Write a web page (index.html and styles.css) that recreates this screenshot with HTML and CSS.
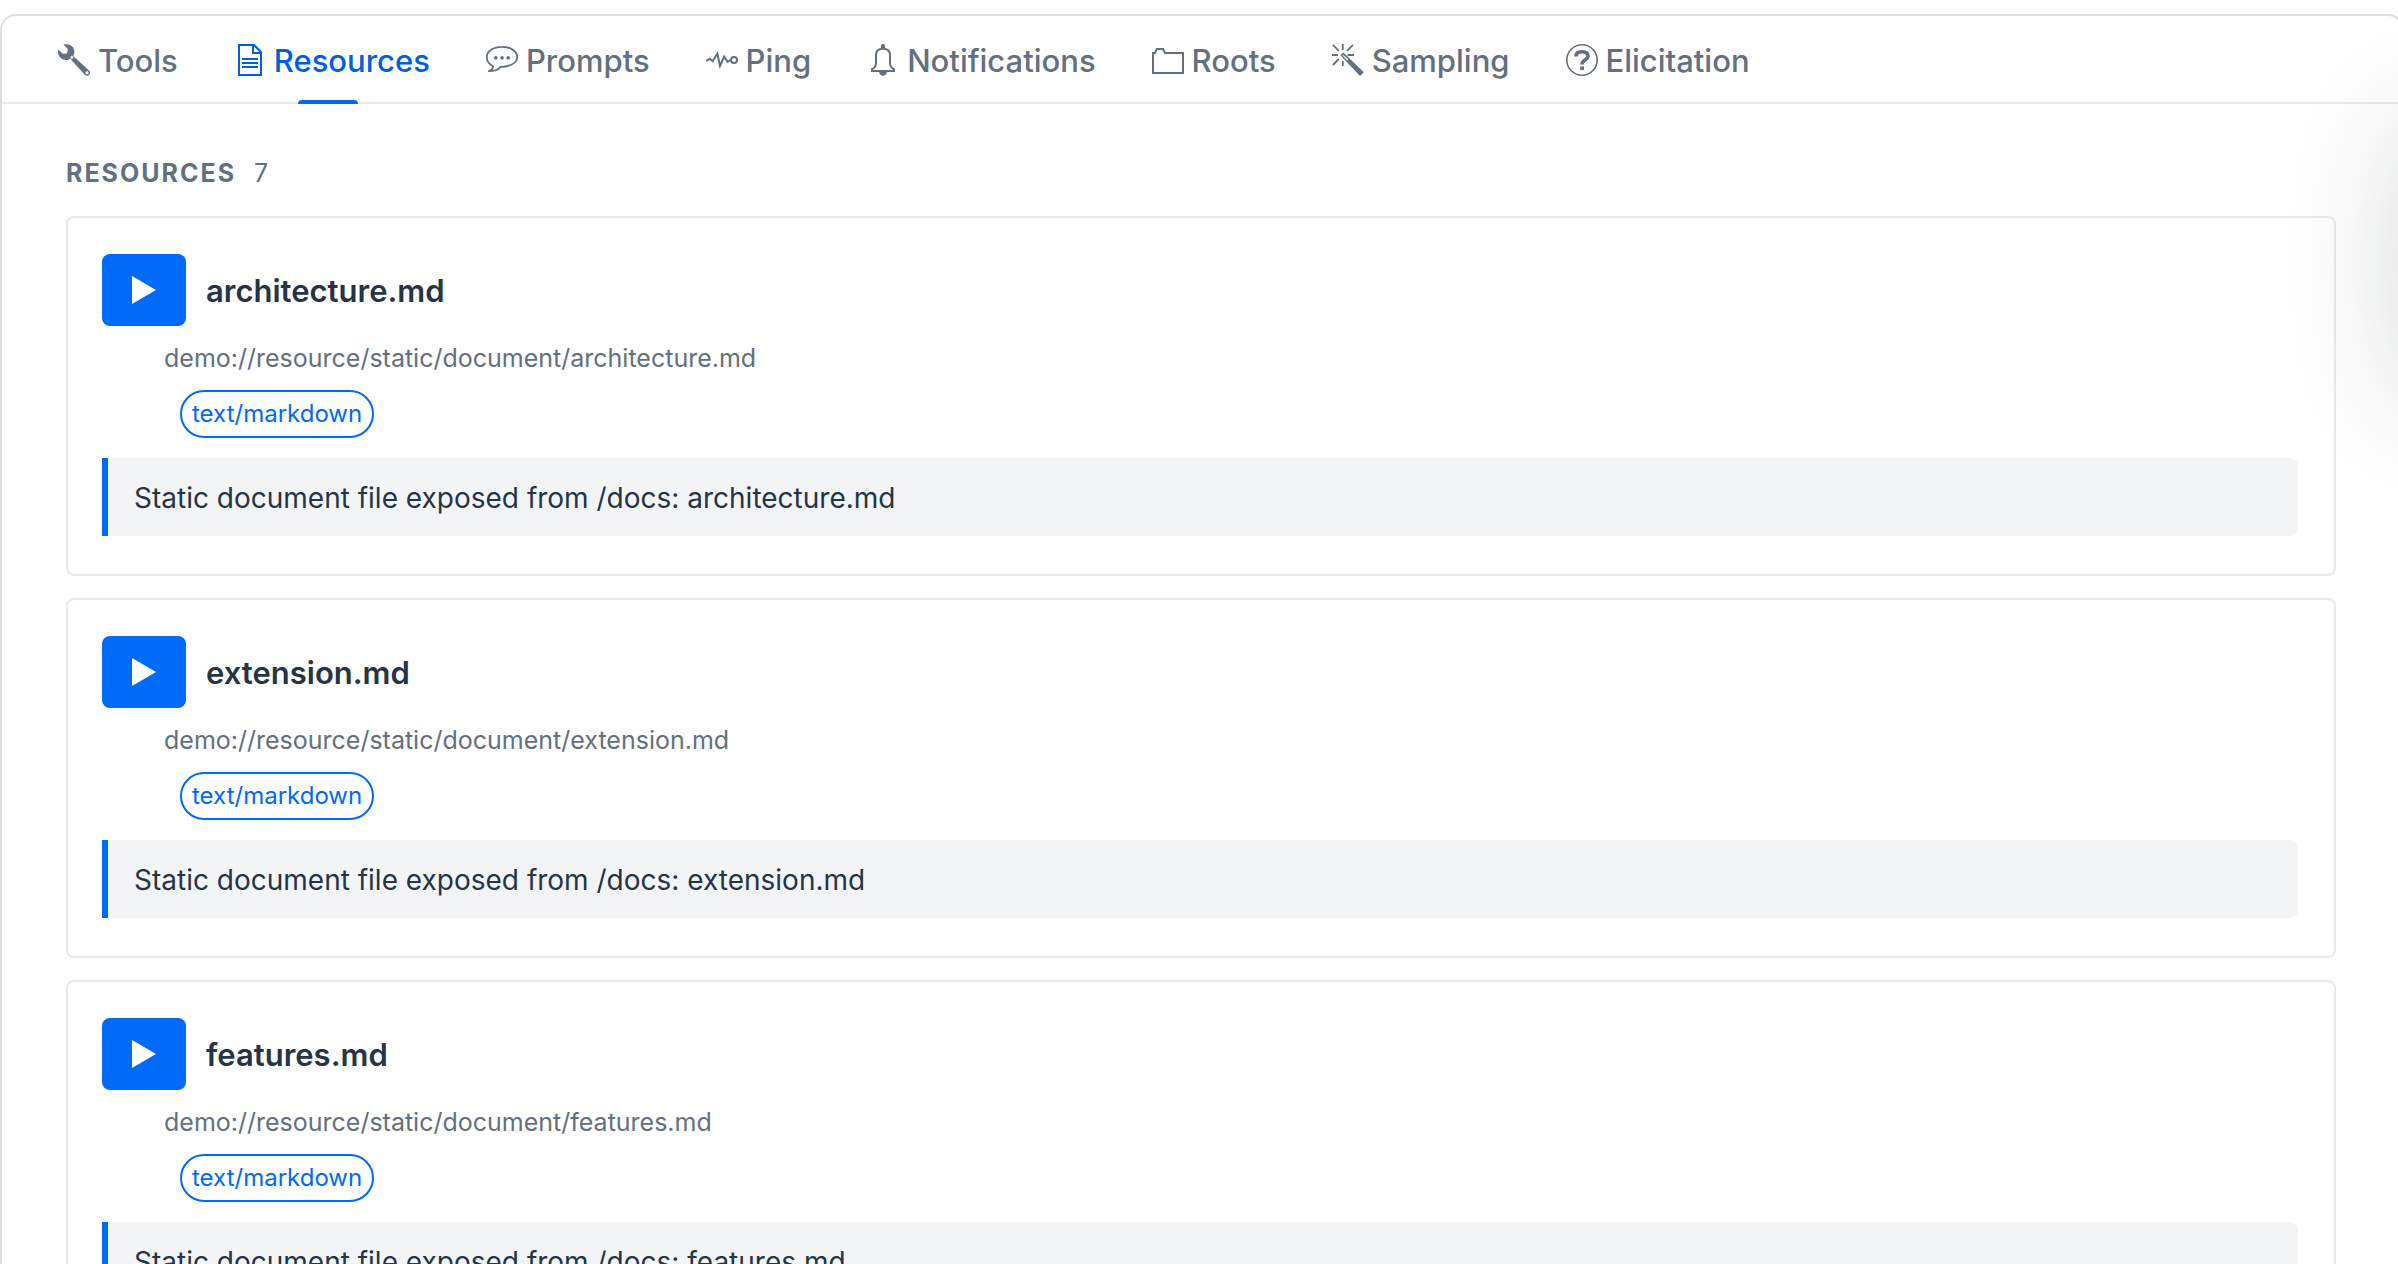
FILE: index.html
```
<!DOCTYPE html>
<html lang="en">
<head>
    <meta charset="UTF-8">
    <title>Resources</title>
    <meta name="viewport" content="width=device-width, initial-scale=1.0">
    <link rel="stylesheet" href="styles.css">
</head>
<body>

<div class="panel">
    <nav class="tabs">
        <button class="tab">
            <svg class="icon" viewBox="0 0 16 16"><path fill="currentColor" fill-rule="evenodd" d="M2.7.3C4.6-.3 6.700.3 7.600 1.800c.6 1 .7 2.100.4 3.200L7.600 6l7.900 7.200c.7.7.7 1.500.1 2.200-.7.7-1.600.7-2.200 0L6.100 7.400 5 7.900c-1.500.3-3-.1-4-1.300C0 5.500-.2 4 .2 2.700L2.500 5l1.900-.2.600-2.200zM14.500 13.600a.8.8 0 1 0 .01 0zM6.900 5.800l-.8 1 .8.8.9-.9z"/></svg>
            Tools
        </button>
        <button class="tab active">
            <svg class="icon" viewBox="0 0 16 16" fill="none" stroke="currentColor"><path d="M2.500.5H10l3.500 3.500v11.500h-11zM9.500.5v4h4M4 7.500h8M4 9.500h8M4 11.500h8"/></svg>
            Resources
        </button>
        <button class="tab">
            <svg class="icon" viewBox="0 0 16 16"><path fill="none" stroke="currentColor" stroke-width=".9" d="M3.600 11.100C1.600 10.100.4 8.500.4 6.600c0-3 3.300-5.200 7.600-5.200s7.600 2.200 7.600 5.200-3.300 4.500-8.500 5c-1 1.500-3.300 2-6 2 1.500-.4 2.400-1.100 2.500-2.500z"/><path fill="currentColor" d="M4.900 6a.9.9 0 1 0 .01 0zM8 6a.9.9 0 1 0 .01 0zM11.100 6a.9.9 0 1 0 .01 0z"/></svg>
            Prompts
        </button>
        <button class="tab">
            <svg class="icon" viewBox="0 0 16 16" fill="none" stroke="currentColor"><path d="M0 8.400l1.900-1 1.400 1.200 2.400-3.800L7 11l2.100-4.700 1.700 2.600 1.500-.9"/><circle cx="14" cy="8" r="1.500"/></svg>
            Ping
        </button>
        <button class="tab">
            <svg class="icon" viewBox="0 0 16 16"><path fill="none" stroke="currentColor" d="M2.500 13.500v-.9c1.400-.7 2-1.600 2-3V5.500c0-2 1.300-3.100 3.500-3.100s3.500 1.100 3.500 3.100v4.100c0 1.400.6 2.300 2 3v.9z"/><path fill="currentColor" d="M7 2.500V1c0-1.300 2-1.300 2 0v1.500zM6 13.500h4c0 3.200-4 3.200-4 0z"/></svg>
            Notifications
        </button>
        <button class="tab">
            <svg class="icon" viewBox="0 0 16 16" fill="none" stroke="currentColor"><path d="M.5 4.500h1l.9-2h3.100l1 2h9v10H.5z"/></svg>
            Roots
        </button>
        <button class="tab">
            <svg class="icon" viewBox="0 0 16 16"><path fill="none" stroke="currentColor" stroke-width=".9" d="M5.400 0v3M0 5.500h3M7.800 5.500H11M.4.4l3 3M10.500.4l-3 3M.4 10.500l3-3M5.400 8.500V11"/><path fill="currentColor" fill-rule="evenodd" d="M4.200 5.600l1.500-1.300 10.200 9.800-1.900 1.900zM5.500 5.400l-.2.3 2.300 2.600.6-.6z"/></svg>
            Sampling
        </button>
        <button class="tab">
            <svg class="icon" viewBox="0 0 16 16"><circle cx="8" cy="8" r="7.600" fill="none" stroke="currentColor" stroke-width=".8"/><path fill="none" stroke="currentColor" stroke-width="1.800" d="M5 6.200C5 4.700 6.200 3.900 8 3.900s3 .8 3 2.200C11 8 8 7.900 8 10.300"/><path fill="currentColor" d="M7.100 11.200H9V13H7.100z"/></svg>
            Elicitation
        </button>
    </nav>

    <main class="content">
        <h2 class="section-title">Resources <span class="count">7</span></h2>

        <div class="card">
            <div class="card-header">
                <button class="run-btn" aria-label="Read architecture.md"><svg class="play" viewBox="0 0 24 28"><path d="M0 0l24 14L0 28z"/></svg></button>
                <h3>architecture.md</h3>
            </div>
            <p class="uri">demo://resource/static/document/architecture.md</p>
            <span class="badge">text/markdown</span>
            <p class="description">Static document file exposed from /docs: architecture.md</p>
        </div>

        <div class="card">
            <div class="card-header">
                <button class="run-btn" aria-label="Read extension.md"><svg class="play" viewBox="0 0 24 28"><path d="M0 0l24 14L0 28z"/></svg></button>
                <h3>extension.md</h3>
            </div>
            <p class="uri">demo://resource/static/document/extension.md</p>
            <span class="badge">text/markdown</span>
            <p class="description">Static document file exposed from /docs: extension.md</p>
        </div>

        <div class="card">
            <div class="card-header">
                <button class="run-btn" aria-label="Read features.md"><svg class="play" viewBox="0 0 24 28"><path d="M0 0l24 14L0 28z"/></svg></button>
                <h3>features.md</h3>
            </div>
            <p class="uri">demo://resource/static/document/features.md</p>
            <span class="badge">text/markdown</span>
            <p class="description">Static document file exposed from /docs: features.md</p>
        </div>
    </main>
</div>

<div class="edge-shadow"></div>

</body>
</html>
```

FILE: styles.css
```
* {
    box-sizing: border-box;
}
body {
    margin: 0;
    padding-top: 14px;
    height: 100vh;
    overflow: hidden;
    font-family: Inter, sans-serif;
    background: #fff;
    color: #253446;
}
h2, h3, p {
    margin: 0;
}
button {
    border: none;
    font-family: inherit;
    cursor: pointer;
}
.panel {
    margin-right: -6px;
    border: 2px solid #dbdfe4;
    border-radius: 16px;
    background: #fefefe;
}
.tabs {
    display: flex;
    gap: 8px;
    height: 88px;
    padding: 0 28px;
    border-bottom: 2px solid #e6eaee;
}
.tab {
    position: relative;
    display: flex;
    align-items: center;
    gap: 8px;
    padding: 2px 20px 0 28px;
    background: none;
    color: #64707f;
    font-size: 31px;
    font-weight: 500;
    white-space: nowrap;
}
.tab.active {
    color: #005fe0;
}
.tab.active::after {
    content: "";
    position: absolute;
    left: 50%;
    bottom: -2px;
    width: 60px;
    height: 4px;
    margin-left: -30px;
    border-radius: 4px 4px 0 0;
    background: #006af9;
}
.icon {
    width: 32px;
    height: 32px;
    flex: none;
}
.content {
    padding: 52px 66px 0 64px;
}
.section-title {
    display: flex;
    align-items: center;
    gap: 14px;
    height: 34px;
    margin-bottom: 26px;
    font-size: 25px;
    font-weight: 700;
    letter-spacing: 2px;
    text-transform: uppercase;
    color: #64707f;
}
.count {
    margin-left: 4px;
    font-weight: 400;
}
.card {
    height: 360px;
    margin-bottom: 22px;
    padding: 36px;
    padding-left: 34px;
    border: 2px solid #e6eaee;
    border-radius: 8px;
}
.card-header {
    display: flex;
    align-items: center;
    gap: 20px;
}
.card-header h3 {
    font-size: 31px;
    font-weight: 600;
}
.run-btn {
    display: flex;
    align-items: center;
    justify-content: center;
    width: 84px;
    height: 72px;
    padding: 0;
    border-radius: 8px;
    background: #006af9;
}
.play {
    width: 24px;
    height: 28px;
    fill: #fff;
}
.uri {
    margin: 16px 0 16px 62px;
    font-size: 25px;
    line-height: 32px;
    color: #64707f;
}
.badge {
    display: block;
    width: fit-content;
    margin-left: 78px;
    padding: 0 10px;
    border: 2px solid #006af9;
    border-radius: 24px;
    font-size: 24px;
    line-height: 44px;
    color: #006af9;
}
.description {
    margin-top: 20px;
    padding: 21px 26px 19px;
    border-left: 6px solid #006af9;
    border-radius: 0 8px 8px 0;
    background: #f3f4f6;
    font-size: 28px;
    line-height: 38px;
}
/* soft shadow coming in from the right edge of the window */
.edge-shadow {
    position: fixed;
    top: 130px;
    right: -116px;
    width: 100px;
    height: 260px;
    border-radius: 30px;
    box-shadow: 0 0 120px rgba(30, 40, 50, 0.22);
    pointer-events: none;
}
```
